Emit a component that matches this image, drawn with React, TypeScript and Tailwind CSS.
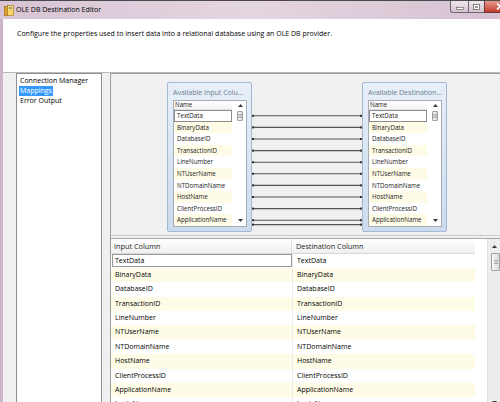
import React from "react";

const names = [
  "TextData",
  "BinaryData",
  "DatabaseID",
  "TransactionID",
  "LineNumber",
  "NTUserName",
  "NTDomainName",
  "HostName",
  "ClientProcessID",
  "ApplicationName",
];
const gridNames = [...names, "LoginName"];

function UpArrow() {
  return (
    <svg width="5" height="3" viewBox="0 0 5 3">
      <path d="M0 3 L2.5 0 L5 3 Z" fill="#3c3c3c" />
    </svg>
  );
}
function DownArrow() {
  return (
    <svg width="5" height="3" viewBox="0 0 5 3">
      <path d="M0 0 L2.5 3 L5 0 Z" fill="#3c3c3c" />
    </svg>
  );
}

function Grip() {
  return (
    <svg width="4" height="4" viewBox="0 0 4 4">
      <path d="M0 0.5 H4 M0 2 H4 M0 3.5 H4" stroke="#8a8a8a" strokeWidth="0.6" />
    </svg>
  );
}

function MiniList({ title }: { title: string }) {
  return (
    <div className="w-[85px] h-[150px] shrink-0 rounded-[2px] border border-[#a3b8d3] bg-gradient-to-b from-[#e7eff9] to-[#cddbee] flex flex-col pl-[5px] pr-[4px] pb-[4px]">
      <div className="h-[17px] shrink-0 pt-[5px] text-[7px] leading-[9px] text-[#6c7d90] whitespace-nowrap overflow-hidden">
        {title}
      </div>
      <div className="flex-1 min-h-0 border border-[#a5acb5] bg-white flex">
        <div className="w-[58px] shrink-0 flex flex-col">
          <div className="h-[9px] shrink-0 pl-[1px] text-[6.2px] leading-[8px] text-[#222] border-b border-[#e3e3e3] bg-gradient-to-b from-white to-[#f3f3f3]">
            Name
          </div>
          {names.map((n, i) =>
            i === 0 ? (
              <div
                key={n}
                className="h-[11.6px] shrink-0 border border-[#8c8c8c] bg-white pl-[2px] text-[6.2px] leading-[9.6px] text-[#1a1a1a] whitespace-nowrap"
              >
                {n}
              </div>
            ) : (
              <div
                key={n}
                className={
                  i % 2 === 1
                    ? "h-[11.6px] shrink-0 bg-[#fefce6] pl-[3px] text-[6.2px] leading-[11.6px] text-[#1a1a1a] whitespace-nowrap"
                    : "h-[11.6px] shrink-0 bg-white pl-[3px] text-[6.2px] leading-[11.6px] text-[#1a1a1a] whitespace-nowrap"
                }
              >
                {n}
              </div>
            )
          )}
        </div>
        <div className="flex-1 flex flex-col items-center pl-[2px]">
          <div className="h-[9px] shrink-0 flex items-center">
            <UpArrow />
          </div>
          <div className="mt-[1px] h-[10px] w-[6px] shrink-0 rounded-[1px] border border-[#a0a0a0] bg-gradient-to-r from-[#f4f4f4] to-[#dedede] flex items-center justify-center">
            <Grip />
          </div>
          <div className="flex-1" />
          <div className="h-[11px] shrink-0 flex items-center">
            <DownArrow />
          </div>
        </div>
      </div>
    </div>
  );
}

function Lines() {
  const ys = Array.from({ length: 11 }, (_, i) => (i < 10 ? 33.8 + 11.6 * i : 142.6));
  return (
    <svg width="110" height="150" viewBox="0 0 110 150" className="shrink-0">
      {ys.map((y, i) => (
        <g key={i}>
          <line x1="1" y1={y} x2="109" y2={y} stroke="#555555" strokeWidth="1.1" />
          <rect x="0" y={y - 1} width="2" height="2" fill="#2e2e2e" />
          <rect x="108" y={y - 1} width="2" height="2" fill="#2e2e2e" />
        </g>
      ))}
    </svg>
  );
}

export default function App() {
  return (
    <div className="w-[500px] h-[402px] overflow-hidden bg-[#f0f0f0] font-['Open_Sans',sans-serif] text-black flex flex-col">
      {/* Title bar */}
      <div className="h-[19px] shrink-0 border-t border-[#4a4a4a] bg-gradient-to-r from-[#d8c4d3] via-[#e4d6e1] to-[#d6c1d0] flex items-start">
        <div className="pl-[4px] pt-[4px]">
          <svg width="10" height="11" viewBox="0 0 10 11">
            <rect x="0.5" y="1.5" width="3" height="9" fill="#e3a21f" stroke="#a0620f" strokeWidth="0.6" />
            <rect x="3.5" y="0.5" width="6" height="10" fill="#f7d664" stroke="#9a7420" strokeWidth="0.6" />
            <rect x="5" y="2.5" width="3" height="1.2" fill="#4f7fc0" />
          </svg>
        </div>
        <div className="pl-[2px] pt-[4px] text-[7px] leading-[10px] whitespace-nowrap">
          OLE DB Destination Editor
        </div>
        <div className="ml-auto flex h-[12px]">
          <div className="w-[18px] border-l border-b border-[#6e6577] rounded-bl-[3px] bg-gradient-to-b from-[#efe6ed] to-[#d4c3d0] flex items-end justify-center pb-[2px]">
            <svg width="8" height="3" viewBox="0 0 8 3">
              <rect x="0.5" y="0.5" width="7" height="2" fill="#ffffff" stroke="#555" strokeWidth="0.6" />
            </svg>
          </div>
          <div className="w-[16px] border-l border-b border-[#6e6577] bg-gradient-to-b from-[#efe6ed] to-[#d4c3d0] flex items-center justify-center">
            <svg width="7" height="6" viewBox="0 0 7 6">
              <rect x="0.5" y="0.5" width="6" height="5" fill="#ffffff" stroke="#555" strokeWidth="0.7" />
              <rect x="2" y="2" width="3" height="2" fill="#9a9a9a" />
            </svg>
          </div>
          <div className="w-[16px] border-l border-b border-[#6e3a36] bg-gradient-to-b from-[#e49a8e] to-[#c4372a] overflow-hidden flex items-center">
            <svg width="8" height="7" viewBox="0 0 8 7" className="ml-[11px] shrink-0">
              <path d="M1 0.5 L7 6.5 M7 0.5 L1 6.5" stroke="#ffffff" strokeWidth="1.6" />
            </svg>
          </div>
        </div>
      </div>

      {/* Body */}
      <div className="flex-1 min-h-0 flex">
        <div className="w-[3px] shrink-0 bg-[#cbb6c9]" />
        <div className="flex-1 min-w-0 flex flex-col">
          <div className="h-[54px] shrink-0 bg-white border-b border-[#b8b8b8] pl-[14px] pt-[10px] text-[7px] leading-[10px] whitespace-nowrap">
            Configure the properties used to insert data into a relational database using an OLE DB provider.
          </div>
          <div className="flex-1 min-h-0 overflow-hidden flex items-start">
            {/* Left page list */}
            <div className="ml-[13px] w-[86px] h-[340px] shrink-0 border border-[#8e8f8f] bg-white pt-[2px] text-[7px] leading-[10px]">
              <div className="h-[10px] pl-[2px] whitespace-nowrap">
                <span className="px-[1px]">Connection Manager</span>
              </div>
              <div className="h-[10px] pl-[2px] whitespace-nowrap">
                <span className="inline-block px-[1px] bg-[#3399ff] text-white">Mappings</span>
              </div>
              <div className="h-[10px] pl-[2px] whitespace-nowrap">
                <span className="px-[1px]">Error Output</span>
              </div>
            </div>

            {/* Mapping panel */}
            <div className="ml-[8px] w-[400px] h-[340px] shrink-0 border-l border-t border-[#9d9d9d] flex flex-col">
              <div className="h-[162px] shrink-0 bg-[#f0f0f0] border-b border-[#cacaca] flex items-start pt-[8px] pl-[56px]">
                <MiniList title="Available Input Colu..." />
                <Lines />
                <MiniList title="Available Destination..." />
              </div>
              <div className="mt-[2px] flex-1 border-t border-[#a8a8a8] bg-white flex">
                <div className="w-[364px] shrink-0 flex flex-col">
                  <div className="h-[14.5px] shrink-0 flex border-b border-[#d8d8d8] bg-gradient-to-b from-white to-[#f0f0f0] text-[7.3px] leading-[14px] text-[#1e1e1e] whitespace-nowrap">
                    <div className="w-[181px] shrink-0 pl-[3px] border-r border-[#e2e2e2]">Input Column</div>
                    <div className="flex-1 pl-[4px]">Destination Column</div>
                  </div>
                  {gridNames.map((n, i) => (
                    <div
                      key={n}
                      className={
                        i % 2 === 1
                          ? "h-[14.4px] shrink-0 flex bg-[#fefce6] text-[7px] leading-[14.4px] whitespace-nowrap"
                          : "h-[14.4px] shrink-0 flex bg-white text-[7px] leading-[14.4px] whitespace-nowrap"
                      }
                    >
                      {i === 0 ? (
                        <div className="w-[181px] shrink-0 pl-[1px] py-[0.7px] flex">
                          <div className="flex-1 border border-[#9b9b9b] pl-[2px] leading-[11px]">{n}</div>
                        </div>
                      ) : (
                        <div className="w-[181px] shrink-0 pl-[4px]">{n}</div>
                      )}
                      <div className="flex-1 pl-[4px] border-l border-[#ececec]">{n}</div>
                    </div>
                  ))}
                </div>
                <div className="w-[12px] shrink-0 bg-white" />
                <div className="w-[13px] shrink-0 bg-[#ededed] border-l border-[#e0e0e0] flex flex-col items-center">
                  <div className="h-[14px] shrink-0 flex items-center pl-[1px]">
                    <UpArrow />
                  </div>
                  <div className="h-[18px] w-[9px] ml-[3px] shrink-0 rounded-[1px] border border-[#a0a0a0] bg-gradient-to-r from-[#f6f6f6] to-[#dcdcdc] flex items-center justify-center">
                    <Grip />
                  </div>
                  <div className="h-[127px] shrink-0" />
                  <div className="h-[8px] shrink-0 flex items-center pl-[1px]">
                    <DownArrow />
                  </div>
                </div>
              </div>
            </div>
          </div>
        </div>
      </div>
    </div>
  );
}
